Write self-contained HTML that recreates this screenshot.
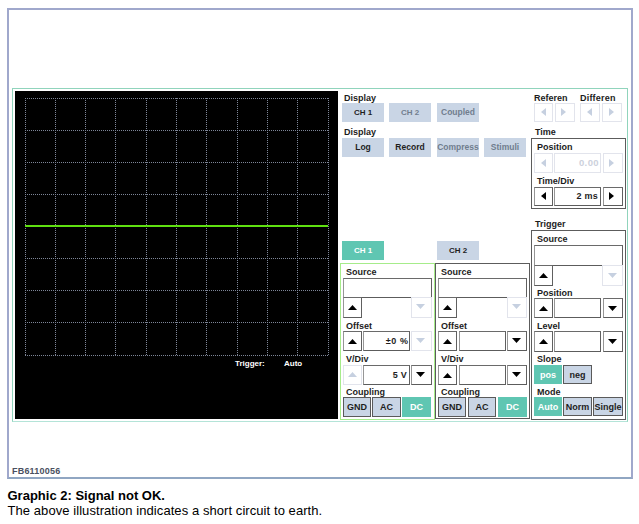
<!DOCTYPE html>
<html><head><meta charset="utf-8">
<style>
*{margin:0;padding:0;box-sizing:border-box}
html,body{width:639px;height:524px;background:#fff;overflow:hidden;font-family:"Liberation Sans",sans-serif}
.a{position:absolute}
.lbl{position:absolute;font-weight:bold;font-size:9px;line-height:10px;color:#1c1c1c;white-space:nowrap}
.btn{position:absolute;background:#c9d5e5;font-weight:bold;font-size:8.5px;text-align:center;color:#1e1e1e;white-space:nowrap}
.btn.g{color:#707d8e}
.btn.c{font-size:8px}
.btn.tl{background:#5fc6b2;color:#fff}
.bx{position:absolute;border:1px solid #6a6a6a;border-color:#6a6a6a #606060 #5c5c5c #969696;background:#fff}
.db{position:absolute;border:1px solid #e2e4ec;background:#fff}
.tu,.td,.tlft,.trt{position:absolute;background:#000}
.tu{width:9px;height:5px;clip-path:polygon(50% 0,100% 100%,0 100%)}
.td{width:9px;height:5px;clip-path:polygon(0 0,100% 0,50% 100%)}
.tlft{width:5px;height:8px;clip-path:polygon(100% 0,100% 100%,0 50%)}
.trt{width:5px;height:8px;clip-path:polygon(0 0,100% 50%,0 100%)}
.cb{position:absolute;background:#c9d5e5;border:1px solid #5a5a5a;font-weight:bold;font-size:9px;text-align:center;color:#1e1e1e;white-space:nowrap}
.cb.tl{background:#5fc6b2;border-color:#5fc6b2;color:#fff}
.val{position:absolute;font-weight:bold;font-size:9px;text-align:right;color:#1e1e1e;white-space:nowrap;letter-spacing:0.25px}
</style></head><body>
<div class="a" style="left:7px;top:8px;width:626px;height:471px;border:2px solid #a0a8cc;border-bottom-color:#90a6c2"></div>
<div class="a" style="left:12px;top:88px;width:616px;height:334px;border:1px solid #90d4bc;border-bottom-color:#b4e4d8"></div>
<div class="a" style="left:15px;top:91px;width:323px;height:328px;background:#000"></div>
<svg class="a" style="left:0;top:0" width="639" height="524">
<g stroke="#7e8698" stroke-width="1" stroke-dasharray="1 1" fill="none">
<line x1="25.5" y1="98" x2="25.5" y2="356"/>
<line x1="55.5" y1="98" x2="55.5" y2="356"/>
<line x1="85.5" y1="98" x2="85.5" y2="356"/>
<line x1="115.5" y1="98" x2="115.5" y2="356"/>
<line x1="146.5" y1="98" x2="146.5" y2="356"/>
<line x1="176.5" y1="98" x2="176.5" y2="356"/>
<line x1="206.5" y1="98" x2="206.5" y2="356"/>
<line x1="237.5" y1="98" x2="237.5" y2="356"/>
<line x1="267.5" y1="98" x2="267.5" y2="356"/>
<line x1="297.5" y1="98" x2="297.5" y2="356"/>
<line x1="328.5" y1="98" x2="328.5" y2="356"/>
<line x1="25" y1="98.5" x2="329" y2="98.5"/>
<line x1="25" y1="130.5" x2="329" y2="130.5"/>
<line x1="25" y1="162.5" x2="329" y2="162.5"/>
<line x1="25" y1="194.5" x2="329" y2="194.5"/>
<line x1="25" y1="226.5" x2="329" y2="226.5"/>
<line x1="25" y1="258.5" x2="329" y2="258.5"/>
<line x1="25" y1="290.5" x2="329" y2="290.5"/>
<line x1="25" y1="322.5" x2="329" y2="322.5"/>
<line x1="25" y1="355.5" x2="329" y2="355.5"/>
</g>
<rect x="25" y="225" width="303" height="2" fill="#5fe010"/>
</svg>
<div class="lbl" style="left:235px;top:359px;font-size:8px;color:#fff">Trigger:</div>
<div class="lbl" style="left:284px;top:359px;font-size:8px;color:#fff">Auto</div>
<div class="lbl" style="left:344px;top:93px;">Display</div>
<div class="btn c" style="left:342px;top:103px;width:42px;height:19px;line-height:19px">CH 1</div>
<div class="btn g c" style="left:389px;top:103px;width:42px;height:19px;line-height:19px">CH 2</div>
<div class="btn g" style="left:437px;top:103px;width:42px;height:19px;line-height:19px">Coupled</div>
<div class="lbl" style="left:344px;top:127px;">Display</div>
<div class="btn " style="left:342px;top:138px;width:42px;height:19px;line-height:19px">Log</div>
<div class="btn " style="left:389px;top:138px;width:42px;height:19px;line-height:19px">Record</div>
<div class="btn g" style="left:437px;top:138px;width:42px;height:19px;line-height:19px">Compress</div>
<div class="btn g" style="left:484px;top:138px;width:42px;height:19px;line-height:19px">Stimuli</div>
<div class="lbl" style="left:534px;top:93px;">Referen</div>
<div class="lbl" style="left:580px;top:93px;letter-spacing:0.2px">Differen</div>
<div class="db" style="left:534px;top:103px;width:19px;height:19px"><div class="tlft" style="left:6px;top:4px;background:#c6d0e0"></div></div>
<div class="db" style="left:555px;top:103px;width:20px;height:19px"><div class="trt" style="left:5px;top:4px;background:#c6d0e0"></div></div>
<div class="db" style="left:580px;top:103px;width:20px;height:19px"><div class="tlft" style="left:6px;top:4px;background:#c6d0e0"></div></div>
<div class="db" style="left:602px;top:103px;width:20px;height:19px"><div class="trt" style="left:6px;top:4px;background:#c6d0e0"></div></div>
<div class="lbl" style="left:535px;top:127px;">Time</div>
<div class="a" style="left:531px;top:138px;width:95px;height:71px;border:1px solid #5c5c5c"></div>
<div class="lbl" style="left:537px;top:142px;">Position</div>
<div class="db" style="left:534px;top:153px;width:19px;height:20px"><div class="tlft" style="left:6px;top:5px;background:#c6d0e0"></div></div>
<div class="db" style="left:554px;top:153px;width:47px;height:20px"></div>
<div class="val" style="left:554px;top:153px;width:45px;height:20px;line-height:20px;font-size:9.5px;letter-spacing:0.4px;color:#ccd1dc">0.00</div>
<div class="db" style="left:603px;top:153px;width:20px;height:20px"><div class="trt" style="left:5px;top:5px;background:#c6d0e0"></div></div>
<div class="lbl" style="left:537px;top:176px;">Time/Div</div>
<div class="bx" style="left:534px;top:187px;width:19px;height:19px"><div class="tlft" style="left:6px;top:4px"></div></div>
<div class="bx" style="left:554px;top:187px;width:47px;height:19px"></div>
<div class="val" style="left:554px;top:187px;width:44px;height:19px;line-height:19px;">2 ms</div>
<div class="bx" style="left:603px;top:187px;width:20px;height:19px"><div class="trt" style="left:5px;top:4px"></div></div>
<div class="lbl" style="left:535px;top:219px;">Trigger</div>
<div class="a" style="left:531px;top:230px;width:95px;height:190px;border:1px solid #5c5c5c"></div>
<div class="lbl" style="left:537px;top:234px;">Source</div>
<div class="bx" style="left:534px;top:245px;width:89px;height:21px"></div>
<div class="bx" style="left:534px;top:265px;width:19px;height:21px"><div class="tu" style="left:4px;top:7px"></div></div>
<div class="db" style="left:602px;top:265px;width:21px;height:21px"><div class="td" style="left:5px;top:7px;background:#c6d0e0"></div></div>
<div class="lbl" style="left:537px;top:288px;">Position</div>
<div class="bx" style="left:534px;top:298px;width:19px;height:20px"><div class="tu" style="left:4px;top:7px"></div></div>
<div class="bx" style="left:554px;top:298px;width:47px;height:20px"></div>
<div class="bx" style="left:603px;top:298px;width:20px;height:20px"><div class="td" style="left:4px;top:7px"></div></div>
<div class="lbl" style="left:537px;top:321px;">Level</div>
<div class="bx" style="left:534px;top:331px;width:19px;height:21px"><div class="tu" style="left:4px;top:7px"></div></div>
<div class="bx" style="left:554px;top:331px;width:47px;height:21px"></div>
<div class="bx" style="left:603px;top:331px;width:20px;height:21px"><div class="td" style="left:4px;top:7px"></div></div>
<div class="lbl" style="left:537px;top:354px;">Slope</div>
<div class="cb tl" style="left:534px;top:365px;width:28px;height:19px;line-height:18px">pos</div>
<div class="cb " style="left:563px;top:365px;width:29px;height:19px;line-height:18px">neg</div>
<div class="lbl" style="left:537px;top:387px;">Mode</div>
<div class="cb tl" style="left:534px;top:397px;width:28px;height:19px;line-height:18px">Auto</div>
<div class="cb " style="left:563px;top:397px;width:29px;height:19px;line-height:18px">Norm</div>
<div class="cb " style="left:593px;top:397px;width:30px;height:19px;line-height:18px">Single</div>
<div class="btn tl c" style="left:342px;top:241px;width:42px;height:19px;line-height:19px">CH 1</div>
<div class="btn c" style="left:437px;top:241px;width:42px;height:19px;line-height:19px">CH 2</div>
<div class="a" style="left:340px;top:263px;width:95px;height:157px;border:1px solid #a6ec8a"></div>
<div class="lbl" style="left:346px;top:267px;">Source</div>
<div class="bx" style="left:343px;top:278px;width:89px;height:20px"></div>
<div class="bx" style="left:343px;top:297px;width:19px;height:21px"><div class="tu" style="left:4px;top:7px"></div></div>
<div class="db" style="left:411px;top:297px;width:21px;height:21px"><div class="td" style="left:4px;top:6px;background:#c6d0e0"></div></div>
<div class="lbl" style="left:346px;top:321px;">Offset</div>
<div class="bx" style="left:343px;top:331px;width:19px;height:20px"><div class="tu" style="left:4px;top:7px"></div></div>
<div class="bx" style="left:363px;top:331px;width:47px;height:20px"></div>
<div class="val" style="left:363px;top:331px;width:45.5px;height:20px;line-height:20px;letter-spacing:0.6px">±0 %</div>
<div class="db" style="left:411px;top:331px;width:21px;height:20px"><div class="td" style="left:4px;top:6px;background:#c6d0e0"></div></div>
<div class="lbl" style="left:346px;top:354px;">V/Div</div>
<div class="db" style="left:343px;top:365px;width:19px;height:20px"><div class="tu" style="left:4px;top:6px;background:#c6d0e0"></div></div>
<div class="bx" style="left:363px;top:365px;width:47px;height:20px"></div>
<div class="val" style="left:363px;top:365px;width:44px;height:20px;line-height:20px;">5 V</div>
<div class="bx" style="left:411px;top:365px;width:21px;height:20px"><div class="td" style="left:4px;top:6px"></div></div>
<div class="lbl" style="left:346px;top:387px;">Coupling</div>
<div class="cb " style="left:343px;top:397px;width:28px;height:20px;line-height:19px">GND</div>
<div class="cb " style="left:372px;top:397px;width:29px;height:20px;line-height:19px">AC</div>
<div class="cb tl" style="left:402px;top:397px;width:29px;height:20px;line-height:19px">DC</div>
<div class="a" style="left:435px;top:263px;width:95px;height:156px;border:1px solid #5c5c5c"></div>
<div class="lbl" style="left:441px;top:267px;">Source</div>
<div class="bx" style="left:438px;top:278px;width:89px;height:20px"></div>
<div class="bx" style="left:438px;top:297px;width:19px;height:21px"><div class="tu" style="left:4px;top:7px"></div></div>
<div class="db" style="left:507px;top:297px;width:20px;height:21px"><div class="td" style="left:4px;top:6px;background:#c6d0e0"></div></div>
<div class="lbl" style="left:441px;top:321px;">Offset</div>
<div class="bx" style="left:438px;top:331px;width:19px;height:20px"><div class="tu" style="left:4px;top:7px"></div></div>
<div class="bx" style="left:459px;top:331px;width:47px;height:20px"></div>
<div class="bx" style="left:507px;top:331px;width:20px;height:20px"><div class="td" style="left:4px;top:6px"></div></div>
<div class="lbl" style="left:441px;top:354px;">V/Div</div>
<div class="bx" style="left:438px;top:365px;width:19px;height:20px"><div class="tu" style="left:4px;top:7px"></div></div>
<div class="bx" style="left:459px;top:365px;width:47px;height:20px"></div>
<div class="bx" style="left:507px;top:365px;width:20px;height:20px"><div class="td" style="left:4px;top:6px"></div></div>
<div class="lbl" style="left:441px;top:387px;">Coupling</div>
<div class="cb " style="left:438px;top:397px;width:28px;height:20px;line-height:19px">GND</div>
<div class="cb " style="left:468px;top:397px;width:28px;height:20px;line-height:19px">AC</div>
<div class="cb tl" style="left:498px;top:397px;width:29px;height:20px;line-height:19px">DC</div>
<div class="lbl" style="left:12px;top:465.5px;color:#4a5060;font-size:9px;letter-spacing:0.2px">FB6110056</div>
<div class="a" style="left:7.5px;top:488px;font-weight:bold;font-size:13px;line-height:15px;color:#000;white-space:nowrap">Graphic 2: Signal not OK.</div>
<div class="a" style="left:7.5px;top:503px;font-size:13px;letter-spacing:0.07px;line-height:15px;color:#000;white-space:nowrap">The above illustration indicates a short circuit to earth.</div>
</body></html>
